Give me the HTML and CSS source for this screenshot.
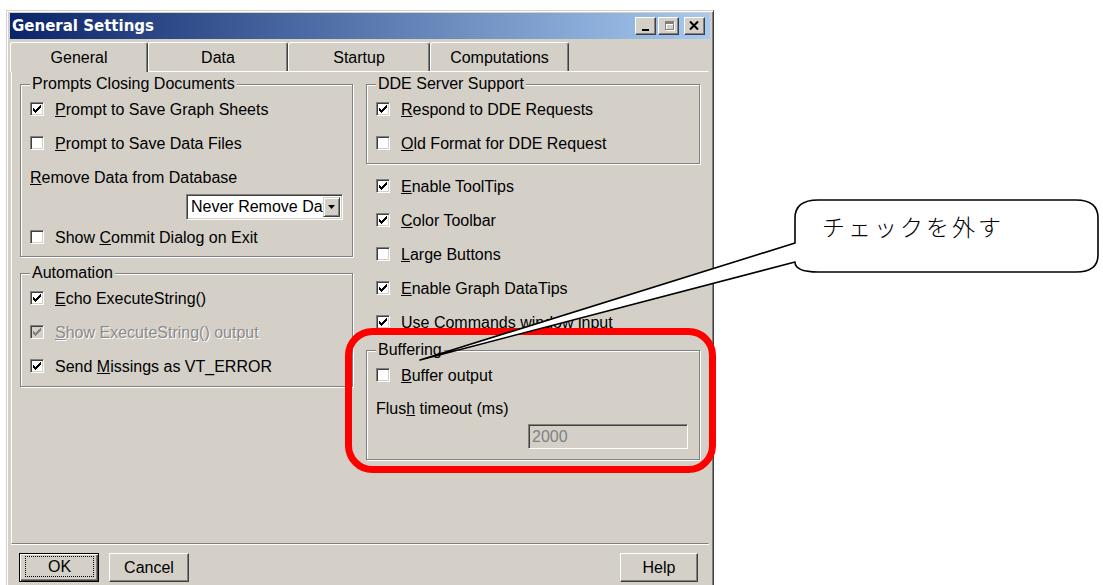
FILE: index.html
```html
<!DOCTYPE html>
<html lang="en">
<head>
<meta charset="utf-8">
<title>General Settings</title>
<link rel="stylesheet" href="styles.css">
</head>
<body>
<div class="window">
  <div class="titlebar">
    <span class="title">General Settings</span>
    <div class="caption-btns">
      <span class="cap-btn"><svg width="19" height="16" viewBox="0 0 19 16"><rect x="6" y="11" width="7" height="2" fill="#000"/></svg></span>
      <span class="cap-btn"><svg width="19" height="16" viewBox="0 0 19 16"><path d="M6 3h9v9h-9z M7 6v5h7v-5z" fill="#fff" fill-rule="evenodd" transform="translate(1 1)"/><path d="M6 3h9v9h-9z M7 6v5h7v-5z" fill="#808080" fill-rule="evenodd"/></svg></span>
      <span class="cap-btn close"><svg width="19" height="16" viewBox="0 0 19 16"><path d="M5 3.5l8 8M13 3.5l-8 8" stroke="#000" stroke-width="2"/></svg></span>
    </div>
  </div>

  <div class="tabs">
    <div class="tab active w138">General</div>
    <div class="tab w140">Data</div>
    <div class="tab w142">Startup</div>
    <div class="tab w139">Computations</div>
  </div>

  <div class="panel">
    <div class="col">
      <fieldset class="group g-prompts">
        <legend>Prompts Closing Documents</legend>
        <label class="row"><span class="cb"><svg viewBox="0 0 12 12"><polygon points="2,5 4,7 10,1 10,4 4,10 2,8"/></svg></span><span><u>P</u>rompt to Save Graph Sheets</span></label>
        <label class="row"><span class="cb"></span><span><u>P</u>rompt to Save Data Files</span></label>
        <div class="row"><span><u>R</u>emove Data from Database</span></div>
        <div class="select-row">
          <div class="select"><span class="select-text">Never Remove Data</span><span class="select-btn"><svg width="7" height="4" viewBox="0 0 7 4"><polygon points="0,0 7,0 3.5,4"/></svg></span></div>
        </div>
        <label class="row"><span class="cb"></span><span>Show <u>C</u>ommit Dialog on Exit</span></label>
      </fieldset>

      <fieldset class="group g-auto">
        <legend>Automation</legend>
        <label class="row"><span class="cb"><svg viewBox="0 0 12 12"><polygon points="2,5 4,7 10,1 10,4 4,10 2,8"/></svg></span><span><u>E</u>cho ExecuteString()</span></label>
        <label class="row disabled"><span class="cb"><svg viewBox="0 0 12 12"><polygon points="2,5 4,7 10,1 10,4 4,10 2,8"/></svg></span><span><u>S</u>how ExecuteString() output</span></label>
        <label class="row"><span class="cb"><svg viewBox="0 0 12 12"><polygon points="2,5 4,7 10,1 10,4 4,10 2,8"/></svg></span><span>Send <u>M</u>issings as VT_ERROR</span></label>
      </fieldset>
    </div>

    <div class="col">
      <fieldset class="group g-dde">
        <legend>DDE Server Support</legend>
        <label class="row"><span class="cb"><svg viewBox="0 0 12 12"><polygon points="2,5 4,7 10,1 10,4 4,10 2,8"/></svg></span><span><u>R</u>espond to DDE Requests</span></label>
        <label class="row"><span class="cb"></span><span><u>O</u>ld Format for DDE Request</span></label>
      </fieldset>

      <div class="free-rows">
        <label class="row"><span class="cb"><svg viewBox="0 0 12 12"><polygon points="2,5 4,7 10,1 10,4 4,10 2,8"/></svg></span><span><u>E</u>nable ToolTips</span></label>
        <label class="row"><span class="cb"><svg viewBox="0 0 12 12"><polygon points="2,5 4,7 10,1 10,4 4,10 2,8"/></svg></span><span><u>C</u>olor Toolbar</span></label>
        <label class="row"><span class="cb"></span><span><u>L</u>arge Buttons</span></label>
        <label class="row"><span class="cb"><svg viewBox="0 0 12 12"><polygon points="2,5 4,7 10,1 10,4 4,10 2,8"/></svg></span><span><u>E</u>nable Graph DataTips</span></label>
        <label class="row"><span class="cb"><svg viewBox="0 0 12 12"><polygon points="2,5 4,7 10,1 10,4 4,10 2,8"/></svg></span><span><u>U</u>se Commands window input</span></label>
      </div>

      <fieldset class="group g-buffer">
        <legend>Buffering</legend>
        <label class="row"><span class="cb"></span><span><u>B</u>uffer output</span></label>
        <div class="row short"><span>Flus<u>h</u> timeout (ms)</span></div>
        <div class="input-row"><span class="textbox">2000</span></div>
      </fieldset>
    </div>
  </div>

  <div class="buttons">
    <span class="btn default"><span class="focus">OK</span></span>
    <span class="btn">Cancel</span>
    <span class="btn help">Help</span>
  </div>
</div>

<svg class="annotation" width="1103" height="585" viewBox="0 0 1103 585">
  <rect x="348.5" y="331.5" width="364" height="138" rx="24" fill="none" stroke="#ff0000" stroke-width="7"/>
  <path d="M795 243 V218 Q795 200 818 200 H1076 Q1098 200 1098 218 V255 Q1098 272 1076 272 H818 Q795 272 795 262 L420 360 Z" fill="#fff" stroke="#000" stroke-width="1.6" stroke-linejoin="round"/>
</svg>
<div class="callout-text">チェックを外す</div>
</body>
</html>
```

FILE: styles.css
```css
* {
  box-sizing: border-box;
}

html,
body {
  overflow: hidden;
}

body {
  margin: 0;
  background: #fff;
  font-family: "Liberation Sans", Arial, sans-serif;
  font-size: 16px;
  color: #000;
}

/* dialog frame */
.window {
  width: 708px;
  height: 590px;
  margin: 10px 0 0 6px;
  padding: 2px 3px 3px;
  background: #d4d0c8;
  border: 1px solid;
  border-color: #d4d0c8 #404040 #404040 #d4d0c8;
  box-shadow: inset 1px 1px #fff, inset -1px -1px #808080;
  display: flex;
  flex-direction: column;
}

.titlebar {
  height: 26px;
  flex: none;
  display: flex;
  align-items: center;
  justify-content: space-between;
  padding: 0 5px 0 2px;
  background: linear-gradient(to right, #0a246a, #a6caf0);
}

.title {
  font-family: "DejaVu Sans", sans-serif;
  font-weight: bold;
  font-size: 15px;
  color: #fff;
}

.caption-btns {
  display: flex;
  gap: 2px;
}

.cap-btn {
  width: 21px;
  height: 18px;
  background: #d4d0c8;
  border: 1px solid;
  border-color: #fff #404040 #404040 #fff;
  box-shadow: inset -1px -1px #808080;
  display: flex;
}

.cap-btn.close {
  margin-left: 3px;
}

/* tab strip */
.tabs {
  display: flex;
  height: 29px;
  margin-top: 3px;
  flex: none;
  position: relative;
  z-index: 1;
}

.tab {
  height: 29px;
  border-top: 1px solid #fff;
  border-left: 1px solid #fff;
  border-right: 1px solid #404040;
  box-shadow: inset -1px 0 #808080;
  border-radius: 3px 3px 0 0;
  background: #d4d0c8;
  display: flex;
  align-items: center;
  justify-content: center;
  padding-top: 1px;
}

.tab.active {
  height: 30px;
}

.w138 { width: 138px; }
.w139 { width: 139px; }
.w140 { width: 140px; }
.w142 { width: 142px; }

.panel {
  height: 473px;
  flex: none;
  margin: 0 1px;
  border: 1px solid;
  border-color: #fff #d4d0c8 #808080 #fff;
  box-shadow: 0 1px #fff;
  padding: 4px 8px 0;
  display: grid;
  grid-template-columns: 333px 334px;
  column-gap: 13px;
  align-items: start;
}

.col {
  display: flex;
  flex-direction: column;
}

/* etched group boxes */
.group {
  margin: 0;
  min-width: 0;
  border: 1px solid #808080;
  box-shadow: inset 1px 1px #fff, 1px 1px #fff;
  padding: 0 9px 2px 9px;
}

.group legend {
  padding: 0 2px;
  margin-left: 0;
  line-height: 16px;
  background: #d4d0c8;
}

.g-auto {
  margin-top: 8px;
  padding-bottom: 3px;
}

.g-dde {
  padding-bottom: 3px;
}

.g-buffer {
  margin-top: 3px;
  padding: 0 11px 10px 9px;
}

.free-rows {
  margin-top: 5px;
  padding-left: 10px;
  display: flex;
  flex-direction: column;
}

.row {
  display: flex;
  align-items: center;
  gap: 11px;
  height: 34px;
  line-height: 17px;
  white-space: nowrap;
}

.row.short {
  height: 32px;
}

.row.disabled {
  color: #8a8a8a;
  text-shadow: 1px 1px #fff;
}

/* checkbox */
.cb {
  width: 14px;
  height: 14px;
  flex: none;
  background: #fff;
  border: 1px solid;
  border-color: #808080 #fff #fff #808080;
  box-shadow: inset 1px 1px #404040, inset -1px -1px #d4d0c8;
  display: flex;
}

.cb svg {
  width: 12px;
  height: 12px;
  fill: #000;
  shape-rendering: crispEdges;
}

.disabled .cb {
  background: #d4d0c8;
}

.disabled .cb svg {
  fill: #808080;
}

/* combo box */
.select-row {
  display: flex;
  justify-content: flex-end;
}

.select {
  width: 157px;
  height: 26px;
  display: flex;
  align-items: stretch;
  background: #fff;
  border: 1px solid;
  border-color: #808080 #fff #fff #808080;
  box-shadow: inset 1px 1px #404040, inset -1px -1px #d4d0c8;
  padding: 2px;
}

.select-text {
  flex: 1;
  overflow: hidden;
  white-space: nowrap;
  padding-left: 2px;
  line-height: 20px;
}

.select-btn {
  width: 17px;
  flex: none;
  background: #d4d0c8;
  border: 1px solid;
  border-color: #d4d0c8 #404040 #404040 #d4d0c8;
  box-shadow: inset 1px 1px #fff, inset -1px -1px #808080;
  display: flex;
  align-items: center;
  justify-content: center;
}

.select-btn svg {
  fill: #000;
}

/* disabled edit box */
.input-row {
  display: flex;
  justify-content: flex-end;
}

.textbox {
  width: 160px;
  height: 25px;
  background: #d4d0c8;
  color: #808080;
  border: 1px solid;
  border-color: #808080 #fff #fff #808080;
  box-shadow: inset 1px 1px #404040, inset -1px -1px #d4d0c8;
  padding-left: 3px;
  line-height: 23px;
}

/* push buttons */
.buttons {
  display: flex;
  gap: 10px;
  margin-top: 9px;
  padding: 0 12px 0 9px;
  flex: none;
}

.btn {
  width: 80px;
  height: 29px;
  background: #d4d0c8;
  border: 1px solid;
  border-color: #fff #404040 #404040 #fff;
  box-shadow: inset -1px -1px #808080;
  display: flex;
  align-items: center;
  justify-content: center;
}

.btn.default {
  border-color: #000;
  box-shadow: inset 1px 1px #fff, inset -1px -1px #404040, inset -2px -2px #808080;
  align-items: stretch;
  justify-content: stretch;
  padding: 2px 4px 4px 5px;
}

.btn .focus {
  flex: 1;
  border: 1px dotted #000;
  display: flex;
  align-items: center;
  justify-content: center;
}

.btn.help {
  width: 78px;
  margin-left: auto;
}

/* annotation drawn over the dialog */
.annotation {
  position: absolute;
  left: 0;
  top: 0;
  pointer-events: none;
}

.callout-text {
  position: absolute;
  left: 822px;
  top: 213px;
  font-family: "Noto Sans CJK JP", sans-serif;
  font-weight: 300;
  font-size: 23px;
  line-height: 26px;
  letter-spacing: 3px;
  color: #000;
}
```
